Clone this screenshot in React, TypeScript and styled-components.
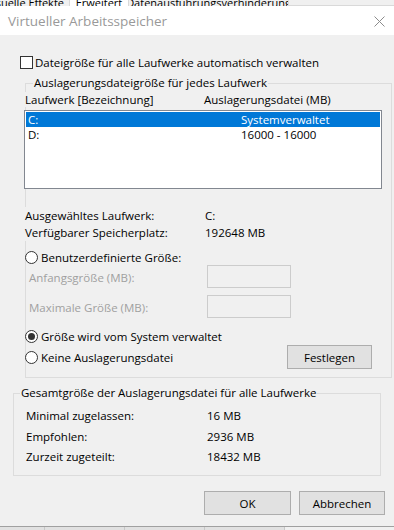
import React from "react";
import styled, { createGlobalStyle } from "styled-components";

const GlobalStyle = createGlobalStyle`
  html, body {
    margin: 0;
    padding: 0;
    background: #f0f0f0;
  }
  body {
    font-family: "Open Sans", "Noto Sans", "Liberation Sans", sans-serif;
    font-size: 11.5px;
    color: #000;
  }
  * { box-sizing: border-box; }
`;

const Screen = styled.div`
  width: 394px;
  height: 530px;
  overflow: hidden;
  display: flex;
  flex-direction: column;
  background: #f0f0f0;
`;

/* the parent window's tab strip peeking out above the dialog */
const TabStrip = styled.div`
  height: 7px;
  flex-shrink: 0;
  display: flex;
  overflow: hidden;
  background: #fff;
`;

const Tab = styled.div<{ $w: number; $align?: string; $active?: boolean }>`
  width: ${p => p.$w}px;
  flex-shrink: 0;
  height: 6px;
  overflow: hidden;
  display: flex;
  justify-content: ${p => p.$align ?? "center"};
  align-items: flex-end;
  padding-right: ${p => (p.$align ? 5 : 0)}px;
  border-right: 1px solid #d9d9d9;
  background: ${p => (p.$active ? "#fff" : "#f0f0f0")};
  span {
    white-space: nowrap;
    flex-shrink: 0;
    font-size: 11px;
    line-height: 15px;
    margin-bottom: -4px;
  }
`;

const TabFill = styled.div`
  flex: 1;
  height: 6px;
  border-bottom: 1px solid #d9d9d9;
  background: #f0f0f0;
`;

const TitleBar = styled.div`
  height: 28px;
  flex-shrink: 0;
  background: #fff;
  display: flex;
  align-items: center;
  padding: 0 9px 0 8px;
`;

const Title = styled.div`
  flex: 1;
  font-size: 13.5px;
  color: #999;
  padding-bottom: 1px;
`;

const Body = styled.div`
  flex: 1;
  display: flex;
  flex-direction: column;
`;

const CheckRow = styled.label`
  display: flex;
  align-items: center;
  gap: 2px;
  height: 13px;
  margin: 21px 0 0 20px;
`;

const CheckBox = styled.span`
  width: 13px;
  height: 13px;
  border: 1px solid #333;
  background: #fff;
`;

const Group = styled.fieldset<{ $left: number; $width: number; $top: number; $bottom: number }>`
  margin: ${p => p.$top}px 0 0 ${p => p.$left}px;
  width: ${p => p.$width}px;
  padding: 0 0 ${p => p.$bottom}px 0;
  border: 1px solid #dcdcdc;
  min-width: 0;
`;

const Legend = styled.legend<{ $indent: number }>`
  margin-left: ${p => p.$indent}px;
  padding: 0 1px;
  line-height: 14px;
`;

const Row = styled.div<{ $col: number; $h: number; $top?: number }>`
  display: grid;
  grid-template-columns: ${p => p.$col}px 1fr;
  height: ${p => p.$h}px;
  line-height: ${p => p.$h}px;
  margin-top: ${p => p.$top ?? 0}px;
  white-space: nowrap;
`;

/* labels are opaque and sit over the group's left border, as in the original */
const Inset = styled.div`
  margin-left: -1px;
  background: #f0f0f0;
  width: fit-content;
`;

const Totals = styled.div`
  padding-left: 12px;
`;

const ListBox = styled.div`
  margin: 3px 0 0 -2px;
  width: 358px;
  height: 79px;
  border: 1px solid #828790;
  background: #fff;
  padding: 1px;
`;

const ListRow = styled.div<{ $selected?: boolean }>`
  display: grid;
  grid-template-columns: 213px 1fr;
  height: 15px;
  line-height: 15px;
  padding-left: 2px;
  background: ${p => (p.$selected ? "#0078d7" : "transparent")};
  color: ${p => (p.$selected ? "#fff" : "#000")};
`;

const RadioRow = styled.label<{ $top: number }>`
  display: flex;
  align-items: center;
  gap: 3px;
  height: 15px;
  margin-top: ${p => p.$top}px;
  margin-left: -1px;
  white-space: nowrap;
`;

const Radio = styled.span<{ $checked?: boolean }>`
  width: 13px;
  height: 13px;
  border-radius: 50%;
  border: 1px solid #333;
  background: #fff;
  display: flex;
  align-items: center;
  justify-content: center;
  &::after {
    content: "";
    width: 7px;
    height: 7px;
    border-radius: 50%;
    background: ${p => (p.$checked ? "#333" : "transparent")};
  }
`;

const FieldRow = styled.div<{ $top: number }>`
  display: flex;
  height: 23px;
  margin-top: ${p => p.$top}px;
`;

const DisabledLabel = styled.span`
  width: 181px;
  padding: 5px 0 0 3px;
  color: #a0a0a0;
  line-height: 15px;
  white-space: nowrap;
`;

const TextBox = styled.div`
  width: 84px;
  height: 23px;
  border: 1px solid #cccccc;
  background: #f0f0f0;
`;

const ActionRow = styled.div`
  display: flex;
  align-items: center;
  margin-top: 1px;
  padding-right: 19px;
  height: 24px;
`;

const Button = styled.button<{ $w: number }>`
  width: ${p => p.$w}px;
  height: 24px;
  padding: 0;
  border: 1px solid #adadad;
  background: #e1e1e1;
  font: inherit;
  color: #000;
`;

const PushRight = styled.div`
  margin-left: auto;
  display: flex;
`;

const Footer = styled.div`
  display: flex;
  justify-content: flex-end;
  gap: 8px;
  margin-top: 15px;
  padding-right: 9px;
`;

const BottomStrip = styled.div`
  margin-top: auto;
  height: 4px;
  flex-shrink: 0;
  border-top: 1px solid #a0a0a0;
  display: flex;
  background: #f0f0f0;
`;

const StripCell = styled.div<{ $w: number }>`
  width: ${p => p.$w}px;
  flex-shrink: 0;
  border-right: 1px solid #c8c8c8;
  background: #e1e1e1;
`;

const CloseIcon = () => (
  <svg width="11" height="11" viewBox="0 0 11 11">
    <path d="M0.5 0.5 L10.5 10.5 M10.5 0.5 L0.5 10.5" stroke="#8c8c8c" strokeWidth="1" fill="none" />
  </svg>
);

export default function App() {
  return (
    <Screen>
      <GlobalStyle />
      <TabStrip>
        <Tab $w={70} $align="flex-end"><span>Visuelle Effekte</span></Tab>
        <Tab $w={59} $active><span>Erweitert</span></Tab>
        <Tab $w={160}><span>Datenausführungsverhinderung</span></Tab>
        <TabFill />
      </TabStrip>
      <TitleBar>
        <Title>Virtueller Arbeitsspeicher</Title>
        <CloseIcon />
      </TitleBar>
      <Body>
        <CheckRow>
          <CheckBox />
          <span>Dateigröße für alle Laufwerke automatisch verwalten</span>
        </CheckRow>

        <Group $left={25} $width={367} $top={7} $bottom={8}>
          <Legend $indent={7}>Auslagerungsdateigröße für jedes Laufwerk</Legend>
          <Row $col={179} $h={15} $top={2}>
            <Inset>Laufwerk [Bezeichnung]</Inset>
            <Inset>Auslagerungsdatei (MB)</Inset>
          </Row>
          <ListBox>
            <ListRow $selected>
              <span>C:</span>
              <span>Systemverwaltet</span>
            </ListRow>
            <ListRow>
              <span>D:</span>
              <span>16000 - 16000</span>
            </ListRow>
          </ListBox>
          <Row $col={179} $h={17} $top={18}>
            <Inset>Ausgewähltes Laufwerk:</Inset>
            <span>C:</span>
          </Row>
          <Row $col={179} $h={17}>
            <Inset>Verfügbarer Speicherplatz:</Inset>
            <span>192648 MB</span>
          </Row>
          <RadioRow $top={9}>
            <Radio />
            <span>Benutzerdefinierte Größe:</span>
          </RadioRow>
          <FieldRow $top={0}>
            <DisabledLabel>Anfangsgröße (MB):</DisabledLabel>
            <TextBox />
          </FieldRow>
          <FieldRow $top={7}>
            <DisabledLabel>Maximale Größe (MB):</DisabledLabel>
            <TextBox />
          </FieldRow>
          <RadioRow $top={11}>
            <Radio $checked />
            <span>Größe wird vom System verwaltet</span>
          </RadioRow>
          <ActionRow>
            <RadioRow $top={0}>
              <Radio />
              <span>Keine Auslagerungsdatei</span>
            </RadioRow>
            <PushRight>
              <Button $w={85}>Festlegen</Button>
            </PushRight>
          </ActionRow>
        </Group>

        <Group $left={13} $width={368} $top={8} $bottom={8}>
          <Legend $indent={6}>Gesamtgröße der Auslagerungsdatei für alle Laufwerke</Legend>
          <Totals>
            <Row $col={181} $h={21} $top={5}>
              <span>Minimal zugelassen:</span>
              <span>16 MB</span>
            </Row>
            <Row $col={181} $h={21}>
              <span>Empfohlen:</span>
              <span>2936 MB</span>
            </Row>
            <Row $col={181} $h={20}>
              <span>Zurzeit zugeteilt:</span>
              <span>18432 MB</span>
            </Row>
          </Totals>
        </Group>

        <Footer>
          <Button $w={87}>OK</Button>
          <Button $w={86}>Abbrechen</Button>
        </Footer>

        <BottomStrip>
          <StripCell $w={45} />
          <StripCell $w={80} />
          <StripCell $w={80} />
          <StripCell $w={80} />
        </BottomStrip>
      </Body>
    </Screen>
  );
}
